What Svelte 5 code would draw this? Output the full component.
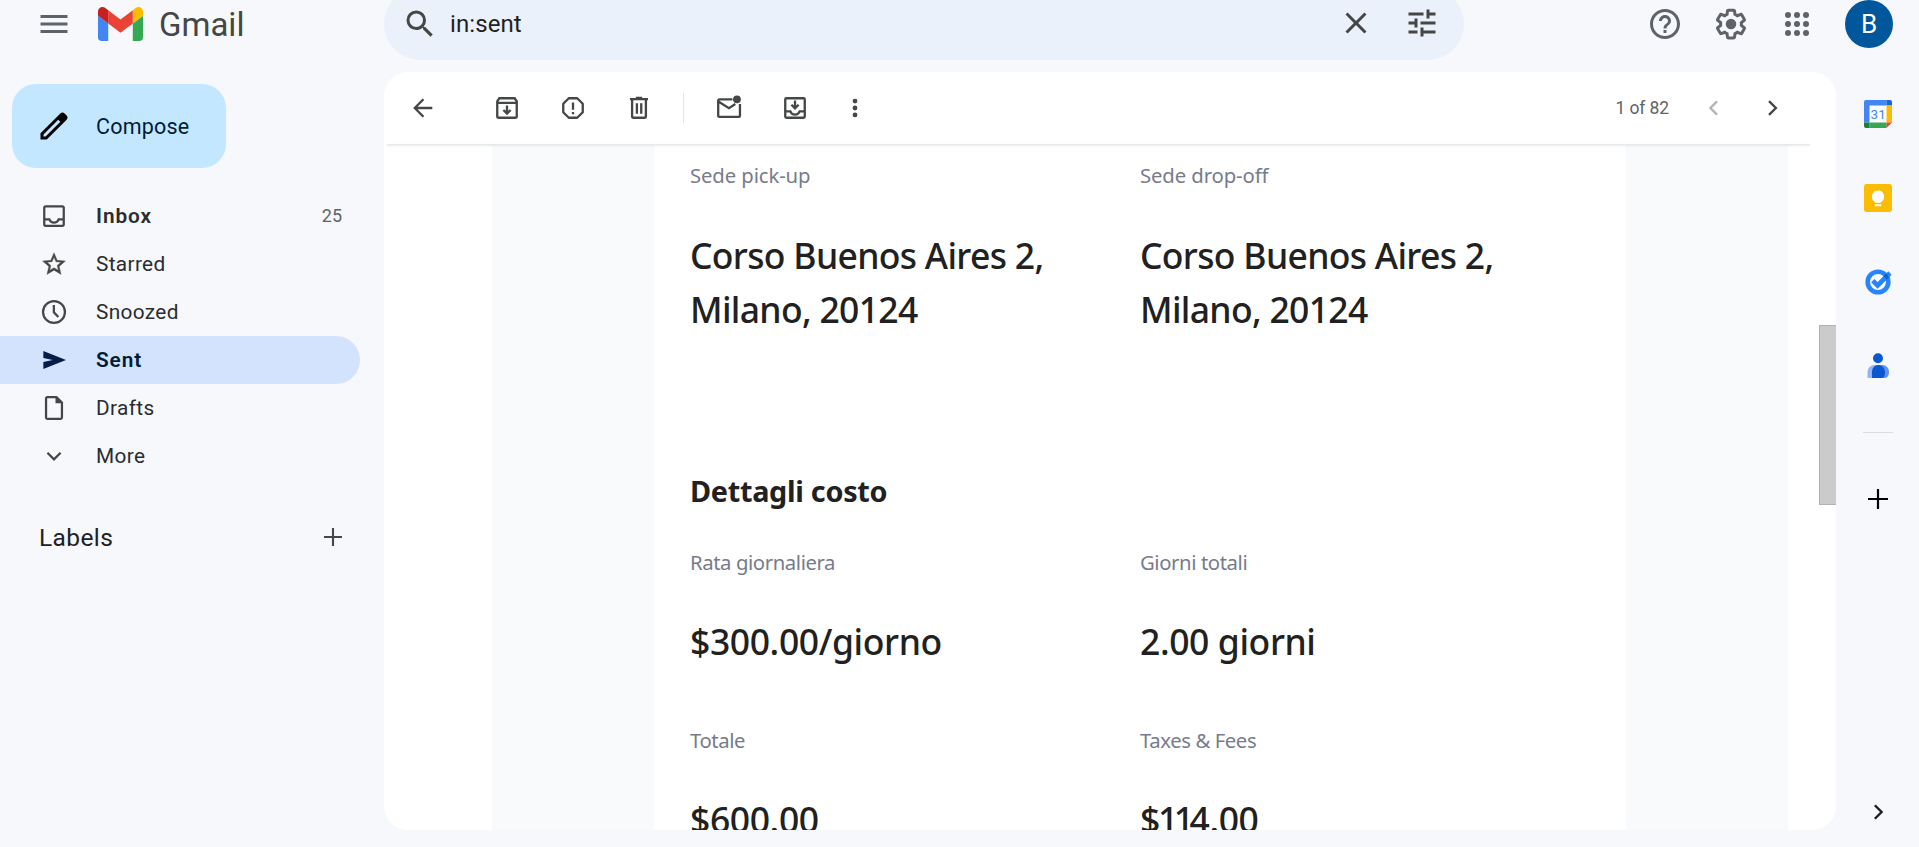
<script>
  const nav = [
    { id: 'inbox', label: 'Inbox', count: '25', bold: true },
    { id: 'star', label: 'Starred' },
    { id: 'clock', label: 'Snoozed' },
    { id: 'sent', label: 'Sent', bold: true, active: true },
    { id: 'draft', label: 'Drafts' },
    { id: 'more', label: 'More' }
  ];
</script>

<div class="app">
  <header class="top">
    <div class="brand">
      <svg class="burger" width="36" height="36" viewBox="0 0 24 24"><path d="M3 18h18v-2H3v2zm0-5h18v-2H3v2zm0-7v2h18V6H3z" fill="#5f6368"/></svg>
      <svg class="logo" width="45" height="34" viewBox="52 42 88 66">
        <path fill="#4285f4" d="M58 108h14V74L52 59v43c0 3.32 2.69 6 6 6"/>
        <path fill="#34a853" d="M120 108h14c3.32 0 6-2.69 6-6V59l-20 15"/>
        <path fill="#fbbc04" d="M120 48v26l20-15v-8c0-7.42-8.47-11.65-14.4-7.2"/>
        <path fill="#ea4335" d="M72 74V48l24 18 24-18v26L96 92"/>
        <path fill="#c5221f" d="M52 51v8l20 15V48l-5.6-4.2c-5.94-4.45-14.4-.22-14.4 7.2"/>
      </svg>
      <span class="wordmark">Gmail</span>
    </div>
    <div class="search">
      <svg width="36" height="36" viewBox="0 0 24 24"><path fill="#444746" d="M15.5 14h-.79l-.28-.27A6.47 6.47 0 0 0 16 9.5 6.5 6.5 0 1 0 9.5 16c1.61 0 3.09-.59 4.23-1.57l.27.28v.79l5 4.99L20.49 19l-4.99-5zm-6 0a4.5 4.5 0 1 1 0-9 4.5 4.5 0 0 1 0 9z"/></svg>
      <span class="query">in:sent</span>
      <svg class="up" width="36" height="36" viewBox="0 0 24 24"><path fill="#444746" d="M19 6.41 17.59 5 12 10.59 6.41 5 5 6.41 10.59 12 5 17.59 6.41 19 12 13.41 17.59 19 19 17.59 13.41 12z"/></svg>
      <svg class="up tune" width="36" height="36" viewBox="0 0 24 24"><path fill="#444746" d="M3 17v2h6v-2H3zM3 5v2h10V5H3zm10 16v-2h8v-2h-8v-2h-2v6h2zM7 9v2H3v2h4v2h2V9H7zm14 4v-2H11v2h10zm-6-4h2V7h4V5h-4V3h-2v6z"/></svg>
    </div>
    <div class="account">
      <svg width="36" height="36" viewBox="0 0 24 24"><path fill="#5f6368" d="M11 18h2v-2h-2v2zm1-16C6.48 2 2 6.48 2 12s4.48 10 10 10 10-4.48 10-10S17.52 2 12 2zm0 18c-4.41 0-8-3.59-8-8s3.59-8 8-8 8 3.59 8 8-3.59 8-8 8zm0-14c-2.21 0-4 1.79-4 4h2c0-1.1.9-2 2-2s2 .9 2 2c0 2-3 1.75-3 5h2c0-2.25 3-2.5 3-5 0-2.21-1.79-4-4-4z"/></svg>
      <svg width="36" height="36" viewBox="0 0 24 24" fill="#5f6368"><path d="M13.85 22.25h-3.7c-.74 0-1.36-.54-1.45-1.27l-.27-1.89c-.27-.14-.53-.29-.79-.46l-1.8.72c-.7.26-1.47-.03-1.81-.65L2.2 15.53c-.35-.66-.2-1.44.36-1.88l1.53-1.19c-.01-.15-.02-.3-.02-.46 0-.15.01-.31.02-.46l-1.52-1.19c-.59-.45-.74-1.26-.37-1.88l1.85-3.19c.34-.62 1.11-.9 1.79-.63l1.81.73c.26-.17.52-.32.78-.46l.27-1.91c.09-.7.71-1.25 1.44-1.25h3.7c.74 0 1.36.54 1.45 1.27l.27 1.89c.27.14.53.29.79.46l1.8-.72c.71-.26 1.48.03 1.82.65l1.84 3.18c.36.66.2 1.44-.36 1.88l-1.52 1.19c.01.15.02.3.02.46s-.01.31-.02.46l1.52 1.19c.56.45.72 1.23.37 1.86l-1.86 3.22c-.34.62-1.11.9-1.8.63l-1.8-.72c-.26.17-.52.32-.78.46l-.27 1.91c-.1.68-.72 1.22-1.46 1.22zm-3.23-2h2.76l.37-2.55.53-.22c.44-.18.88-.44 1.34-.78l.45-.34 2.38.96 1.38-2.4-2.03-1.58.07-.56c.03-.26.06-.51.06-.78s-.03-.53-.06-.78l-.07-.56 2.03-1.58-1.39-2.4-2.39.96-.45-.35c-.42-.32-.87-.58-1.33-.77l-.52-.22-.37-2.55h-2.76l-.37 2.55-.53.21c-.44.19-.88.44-1.34.79l-.45.33-2.38-.95-1.39 2.39 2.03 1.58-.07.56a7 7 0 0 0-.06.79c0 .26.02.53.06.78l.07.56-2.03 1.58 1.38 2.4 2.39-.96.45.35c.43.33.86.58 1.33.77l.53.22.38 2.55z"/><circle cx="12" cy="12" r="3.5"/></svg>
      <svg width="36" height="36" viewBox="0 0 24 24" fill="#5f6368">
        {#each [6, 12, 18] as cy}{#each [6, 12, 18] as cx}<circle {cx} {cy} r="2"/>{/each}{/each}
      </svg>
      <span class="avatar">B</span>
    </div>
  </header>

  <aside class="side">
    <button class="compose">
      <svg width="36" height="36" viewBox="0 0 24 24"><path d="M20.41 4.94l-1.35-1.35c-.78-.78-2.05-.78-2.83 0L3 16.82V21h4.18L20.41 7.77c.79-.78.79-2.05 0-2.83zm-14 14.12L5 19v-1.36l9.82-9.82 1.41 1.41-9.82 9.83z"/></svg>
      <span>Compose</span>
    </button>
    <nav>
      {#each nav as item}
        <a class="item" class:bold={item.bold} class:active={item.active} href="#{item.id}">
          <svg width="30" height="30" viewBox="0 0 20 20" fill="none" stroke="#444746" stroke-width="1.5">
            {#if item.id === 'inbox'}
              <rect x="3.5" y="3.5" width="13" height="13" rx="1"/><path d="M3.5 12.2h3.4c.5 1.3 1.7 2.2 3.1 2.2s2.6-.9 3.1-2.2h3.4"/>
            {:else if item.id === 'star'}
              <path fill="#444746" stroke="#444746" stroke-width=".25" d="M17.6 8l-5.47-.48L10 2.5 7.87 7.53 2.4 8l4.15 3.6L5.3 16.95 10 14.1l4.7 2.85-1.24-5.35L17.6 8zM10 12.5l-2.86 1.73.76-3.25-2.52-2.19 3.33-.29L10 5.44l1.3 3.07 3.32.28-2.52 2.19.76 3.26L10 12.5z"/>
            {:else if item.id === 'clock'}
              <circle cx="10" cy="10" r="7.3"/><path d="M9.9 5.3v4.9l3 3.1"/>
            {:else if item.id === 'sent'}
              <path fill="#041e49" stroke="none" d="M2.9 4v4.6l6.2 1.4-6.2 1.4V16L18 10z"/>
            {:else if item.id === 'draft'}
              <path stroke-linejoin="round" d="M4.7 3.6a.9.9 0 0 1 .9-.9h6l3.7 3.7v10a.9.9 0 0 1-.9.9H5.6a.9.9 0 0 1-.9-.9z"/><path fill="#444746" stroke="none" d="M11 2.2v4.7h4.700z"/>
            {:else}
              <path d="M5.6 7.8 10 12.2l4.4-4.4"/>
            {/if}
          </svg>
          <span class="name">{item.label}</span>
          {#if item.count}<span class="count">{item.count}</span>{/if}
        </a>
      {/each}
    </nav>
    <div class="labels">
      <span>Labels</span>
      <svg width="30" height="30" viewBox="0 0 20 20" stroke="#444746" stroke-width="1.4"><path d="M10 4v12M4 10h12"/></svg>
    </div>
  </aside>

  <main class="panel">
    <div class="toolbar">
      <svg class="i back" viewBox="0 0 20 20"><path d="M16.2 10H4.8M10.3 4.2 4.5 10l5.8 5.8"/></svg>
      <svg class="i" viewBox="0 0 20 20"><path d="M3.5 5.6v9.900c0 .6.4 1 1 1h11c.6 0 1-.4 1-1V5.600l-1.400-2.100H4.900zM3.500 6.600h13"/><path d="M10 8.400v5M7.600 11.300l2.400 2.400 2.400-2.400"/></svg>
      <svg class="i" viewBox="0 0 20 20"><path stroke-linejoin="round" d="M7.2 3.5h5.6l3.7 3.7v5.600l-3.700 3.700H7.200l-3.700-3.700V7.200z"/><path d="M10 6.300v4.800M10 12.700v1.500"/></svg>
      <svg class="i" viewBox="0 0 20 20"><path d="M4 4.100h12M5.400 4.400v11.100c0 .6.4 1 1 1h7.200c.6 0 1-.4 1-1V4.400M8.600 6.800v7M11.500 6.800v7"/><path d="M7.900 3.300h4.200" stroke-width="1.6"/></svg>
      <i class="sep"></i>
      <svg class="i" viewBox="0 0 20 20"><path d="M12.300 4.300H3.700c-.5 0-.9.4-.9.9v9.800c0 .5.4.9.9.9h12.700c.5 0 .9-.4.9-.9V7.400M2.900 5.600l7.100 4.500 4.200-2.700"/><circle cx="15.300" cy="4.200" r="2.600" fill="#444746" stroke="none"/></svg>
      <svg class="i" viewBox="0 0 20 20"><rect x="3.5" y="3.5" width="13" height="13" rx=".8"/><path d="M3.500 12.200h3.400c.5 1.300 1.700 2.200 3.100 2.200s2.600-.9 3.100-2.200h3.400M10 5v5M7.600 7.800l2.400 2.400 2.400-2.400"/></svg>
      <svg class="i dots" viewBox="0 0 20 20"><g fill="#444746" stroke="none"><circle cx="10" cy="5.4" r="1.6"/><circle cx="10" cy="10" r="1.6"/><circle cx="10" cy="14.6" r="1.6"/></g></svg>
      <span class="pos">1 of 82</span>
      <svg class="i prev" viewBox="0 0 20 20"><path d="M12 5.600 7.600 10l4.400 4.400"/></svg>
      <svg class="i next" viewBox="0 0 20 20"><path d="M8 5.400 12.600 10 8 14.600"/></svg>
    </div>
    <div class="shade"></div>
    <div class="scroll">
      <div class="mail">
        <article class="card">
          <dl class="grid first">
            <div><dt>Sede pick-up</dt><dd>Corso Buenos Aires 2, Milano, 20124</dd></div>
            <div><dt>Sede drop-off</dt><dd>Corso Buenos Aires 2, Milano, 20124</dd></div>
          </dl>
          <h2>Dettagli costo</h2>
          <dl class="grid tight">
            <div><dt>Rata giornaliera</dt><dd>$300.00/giorno</dd></div>
            <div><dt>Giorni totali</dt><dd>2.00 giorni</dd></div>
          </dl>
          <dl class="grid last">
            <div><dt>Totale</dt><dd>$600.00</dd></div>
            <div><dt>Taxes &amp; Fees</dt><dd>$<span class="ones">11</span>4.00</dd></div>
          </dl>
        </article>
      </div>
      <div class="thumb"></div>
    </div>
  </main>

  <aside class="apps">
    <svg width="28" height="28" viewBox="0 0 28 28">
      <rect x="5" y="5" width="18" height="18" fill="#fff"/>
      <path fill="#4285f4" d="M2 0h20.500v5.500h-17v17H0V2a2 2 0 0 1 2-2z"/>
      <path fill="#1967d2" d="M22.500 0H26a2 2 0 0 1 2 2v3.500h-5.500z"/>
      <path fill="#fbbc04" d="M22.500 5.500H28v17h-5.500z"/>
      <path fill="#34a853" d="M5.500 22.500h17V28h-17z"/>
      <path fill="#188038" d="M0 22.500h5.500V28H2a2 2 0 0 1-2-2z"/>
      <path fill="#ea4335" d="M22.500 22.500H28L22.500 28z"/>
      <text x="14.200" y="18.700" text-anchor="middle" class="day">31</text>
    </svg>
    <svg width="28" height="28" viewBox="0 0 28 28">
      <rect width="28" height="28" rx="2.4" fill="#fbbc04"/>
      <path fill="#fff" d="M14 6.600a6.100 6.100 0 0 0-3.200 11.300v.9h6.400v-.9A6.100 6.100 0 0 0 14 6.600zM10.800 20.200h6.400v2.100h-6.400z"/>
    </svg>
    <svg width="28" height="28" viewBox="0 1 28 28" fill="none">
      <circle cx="14" cy="15" r="10.300" stroke="#2684fc" stroke-width="4.600"/>
      <path d="M8.800 13.600 13.600 18.400 26 6" stroke="#2684fc" stroke-width="4.600"/>
      <path fill="#0066da" d="M19.400 9.100 22.200 6.400a12.600 12.600 0 0 1 2.800 3.900L22.700 12.600z"/>
    </svg>
    <svg width="28" height="28" viewBox="0 0 28 28">
      <path fill="#91b4fb" d="M3.500 26v-6a7 7 0 0 1 7-7h4v13z"/>
      <path fill="#5c92f7" d="M13 13h5.500a6.500 6.500 0 0 1 6.500 6.500c0 4-1.500 6.500-4.500 6.500H13z"/>
      <path fill="#0b57d0" d="M8 26v-6.500A6.500 6.500 0 0 1 14 13a7 7 0 0 1 7 7c0 3-.7 6-3 6z"/>
      <circle cx="14" cy="6.300" r="5" fill="#0b57d0"/>
    </svg>
    <i class="rule"></i>
    <svg class="plus" width="20" height="20" viewBox="0 0 20 20" stroke="#000" stroke-width="2.2"><path d="M10 0v20M0 10h20"/></svg>
    <svg class="hide" width="30" height="30" viewBox="0 0 20 20" fill="none" stroke="#1f1f1f" stroke-width="1.6"><path d="M7.900 5.500 12.400 10l-4.500 4.500"/></svg>
  </aside>
</div>

<style>
  :global(body) { background: #f6f8fc; overflow: hidden; }
  .app {
    width: 1919px; height: 847px; box-sizing: border-box; overflow: hidden;
    display: grid; grid-template: 72px 758px / 384px 1452px 83px;
    background: #f6f8fc; font-family: Roboto, "Liberation Sans", sans-serif; color: #202124;
  }
  svg { display: block; flex: none; overflow: visible; }
  .top { grid-column: 1 / -1; display: flex; align-items: flex-start; }
  .brand { width: 384px; height: 48px; display: flex; align-items: center; box-sizing: border-box; padding-left: 36px; }
  .logo { margin-left: 26px; }
  .wordmark { margin-left: 16px; padding-top: 2px; font-size: 33px; line-height: 48px; color: #444746; font-weight: 400; }
  .search {
    width: 1080px; height: 72px; margin-top: -12px; border-radius: 36px; background: #eaf1fb;
    box-sizing: border-box; padding: 0 24px 0 18px; display: flex; align-items: center;
  }
  .query { flex: 1; margin-left: 12px; font-size: 24px; line-height: 36px; letter-spacing: .1px; color: #1f1f1f; }
  .up { margin-top: -2px; }
  .tune { margin-left: 30px; }
  .account { margin-left: 183px; height: 48px; display: flex; align-items: center; gap: 30px; }
  .avatar {
    width: 48px; height: 48px; border-radius: 50%; background: #00579c; color: #fff;
    font-size: 26px; line-height: 49px; text-align: center;
  }
  .side { padding-top: 12px; }
  .compose {
    margin: 0 0 24px 12px; width: 214px; height: 84px; border: 0; border-radius: 24px; padding: 0 0 0 24px;
    background: #c2e7ff; color: #001d35; display: flex; align-items: center; font: 400 21.5px Roboto, sans-serif;
  }
  .compose span { margin-left: 24px; letter-spacing: .2px; }
  .item {
    display: flex; align-items: center; width: 360px; height: 48px; box-sizing: border-box;
    padding: 0 18px 0 39px; border-radius: 0 24px 24px 0; color: #2a2c30; text-decoration: none; font-size: 20.8px;
  }
  .name { margin-left: 27px; flex: 1; letter-spacing: .35px; }
  .bold .name { font-weight: 600; letter-spacing: .9px; }
  .active { background: #d3e3fd; color: #001d35; }
  .count { font-size: 18px; line-height: 20px; padding-bottom: 1px; color: #5f6368; }
  .labels { display: flex; justify-content: space-between; align-items: center; height: 48px; margin: 33px 36px 0 39px; font-size: 24.5px; letter-spacing: .4px; }
  .panel { background: #fff; border-radius: 24px; overflow: hidden; }
  .toolbar { height: 72px; display: flex; align-items: center; padding-left: 24px; }
  .i { width: 30px; height: 30px; fill: none; stroke: #444746; stroke-width: 1.55; margin-right: 36px; }
  .back { margin-right: 54px; }
  .sep { width: 1px; height: 30px; background: #e1e5ec; margin: 0 30px 0 -7px; }
  .dots { margin: 0 0 0 -6px; }
  .pos { margin-left: auto; font-size: 17.5px; letter-spacing: -.1px; color: #5f6368; }
  .prev { opacity: .4; margin: 0 28px 0 30px; }
  .next { margin-right: 49px; }
  .shade { height: 1px; margin: 0 26px 0 3px; background: #e8e9ea; box-shadow: 0 1px 2px rgba(60, 64, 67, .15); position: relative; z-index: 1; }
  .scroll { height: 685px; display: flex; justify-content: space-between; overflow: hidden; }
  .mail { width: 1296px; height: 685px; margin-left: 108px; background: #f9fafc; display: flex; }
  .card { width: 972px; margin-left: 162px; background: #fff; box-sizing: border-box; padding: 15px 36px 0; color: #212121; font-family: "Noto Sans", "Open Sans", sans-serif; }
  .thumb { width: 17px; height: 180px; margin-top: 180px; box-sizing: border-box; background: #cbcbcb; border: 1px solid #b3b3b3; border-right: 0; }
  .grid { margin: 0; display: grid; grid-template-columns: 450px 450px; }
  dt { font-size: 20.3px; line-height: 31px; letter-spacing: -.4px; color: #767c8c; }
  .first dt { letter-spacing: -.1px; }
  dd { margin: 36px 0 0; font-size: 35.5px; line-height: 54px; font-weight: 500; letter-spacing: -.4px; width: 390px; }
  .first dd { margin-top: 37px; letter-spacing: -.68px; }
  h2 { margin: 133px 0 35px; font-size: 28.8px; line-height: 43px; font-weight: 700; letter-spacing: -.28px; }
  .last { margin-top: 57px; }
  .ones { letter-spacing: -4.500px; margin-left: -2px; }
  .apps { padding: 28px 0 0 28px; display: flex; flex-direction: column; gap: 56px; }
  .day { font: 400 13.500px Roboto, sans-serif; fill: #4285f4; }
  .rule { width: 30px; height: 1px; background: #dadce0; margin: -4px 0 0 -1px; }
  .plus { margin-left: 4px; }
  .hide { margin: 232px 0 0 -1px; }
</style>
